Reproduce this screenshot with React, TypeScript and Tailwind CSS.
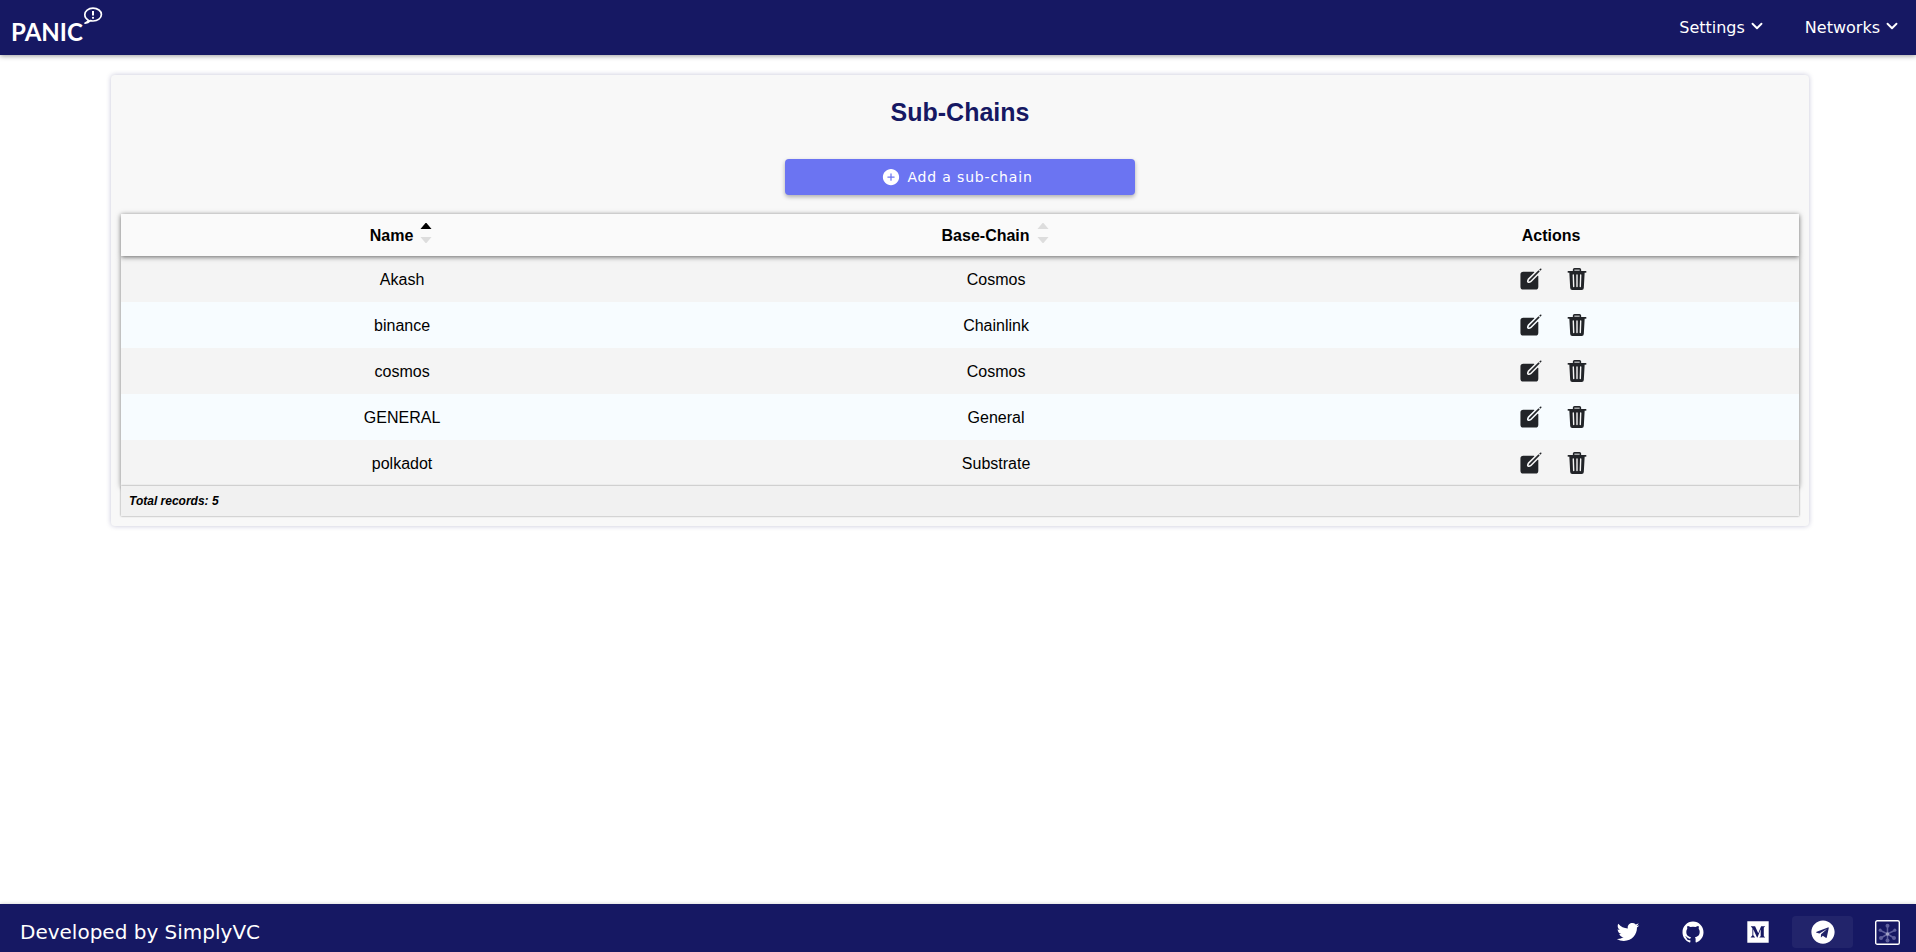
import type { ReactNode } from "react";
import {
  IoAddCircle,
  IoChevronDown,
  IoCreate,
  IoLogoGithub,
  IoLogoMedium,
  IoLogoTwitter,
} from "react-icons/io5";
import { FaTelegram } from "react-icons/fa";

type Chain = { name: string; base: string };

const chains: Chain[] = [
  { name: "Akash", base: "Cosmos" },
  { name: "binance", base: "Chainlink" },
  { name: "cosmos", base: "Cosmos" },
  { name: "GENERAL", base: "General" },
  { name: "polkadot", base: "Substrate" },
];

function Logo() {
  return (
    <a href="#home" className="flex h-full items-start pl-[11px]" aria-label="PANIC">
      <span className="mt-4 font-['Lato','Open_Sans',sans-serif] text-2xl/8 font-bold">PANIC</span>
      <svg className="mt-[7px] h-[18px] w-5" viewBox="0 0 20 18" fill="none" aria-hidden="true">
        <path
          d="M5.6 13.4C3.2 12.2 1.8 10 1.8 7.6 1.8 4 5.3 1.2 10 1.2s8.4 2.8 8.4 6.4S14.7 14 10 14c-1 0-1.900-.1-2.700-.4C5.900 15 4.300 15.900 2 16.200c1.500-.8 2.800-1.700 3.600-2.800Z"
          stroke="white"
          strokeWidth="1.700"
          strokeLinejoin="round"
        />
        <path d="M10 4v4.400" stroke="white" strokeWidth="2" />
        <circle cx="10" cy="10.800" r="1.100" fill="white" />
      </svg>
    </a>
  );
}

function NavMenu({ label }: { label: string }) {
  return (
    <button type="button" className="flex items-center gap-1 text-base">
      {label}
      <IoChevronDown className="-mt-1 size-4 [&_path]:stroke-[60px]" />
    </button>
  );
}

function SortArrows({ active = false }: { active?: boolean }) {
  return (
    <svg className="-mt-1.5 h-[22px] w-3" viewBox="0 0 12 22" aria-hidden="true">
      <path d="M0.500 7 5.500 1h1l5 6Z" fill={active ? "#000" : "#ddd"} />
      <path d="M0.500 15h11l-5 6h-1Z" fill="#ddd" />
    </svg>
  );
}

function SortHeader({ label, active }: { label: string; active?: boolean }) {
  return (
    <button type="button" className="inline-flex items-center gap-[7px] align-middle font-bold">
      {label}
      <SortArrows active={active} />
    </button>
  );
}

function TrashIcon() {
  return (
    <svg className="size-6" viewBox="0 0 24 24" fill="none" aria-hidden="true">
      <path d="M8.600 4.500V2.600q0-.9.900-.9h5q.9 0 .9.900v1.900" fill="#a5a7a9" stroke="currentColor" strokeWidth="1.500" />
      <path d="M2.700 4h18.600v1.700H2.700Z" fill="currentColor" />
      <path d="M4.300 5h15.400l-.9 16q-.1 2-2.100 2H7.300q-2 0-2.100-2Z" fill="currentColor" />
      <path d="m8.300 8 .4 11.500M12 8v11.500M15.700 8l-.4 11.500" stroke="#f4f4f4" strokeWidth="1.400" strokeLinecap="round" />
    </svg>
  );
}

function HubIcon() {
  return (
    <svg className="size-[25px]" viewBox="0 0 25 25" fill="none" aria-hidden="true">
      <rect x="0.700" y="0.700" width="23.600" height="23.600" rx="1.600" stroke="white" strokeWidth="1.400" />
      <path d="M12.500 6v14M5.500 10.500l7 3.500 7-3.500M6 18l6.500-4 6.500 4" stroke="#5f609d" strokeWidth="1.500" />
      <g fill="#5f609d">
        <circle cx="12.500" cy="5.800" r="2" />
        <circle cx="12.500" cy="20.500" r="2" />
        <circle cx="5.200" cy="10.200" r="1.600" />
        <circle cx="19.800" cy="10.200" r="1.600" />
        <circle cx="6" cy="18" r="2" />
        <circle cx="19" cy="18" r="2" />
      </g>
      <circle cx="12.500" cy="14" r="1.700" fill="#a0a1c5" />
    </svg>
  );
}

function SocialLink({ label, active, children }: { label: string; active?: boolean; children: ReactNode }) {
  return (
    <a
      href="#"
      aria-label={label}
      className={`flex h-8 w-[61px] shrink-0 items-center justify-center rounded-sm text-2xl ${active ? "bg-white/5" : ""}`}
    >
      {children}
    </a>
  );
}

export default function App() {
  return (
    <div className="flex min-h-screen flex-col overflow-x-hidden bg-white font-['Liberation_Sans',Arial,sans-serif] text-black">
      <header className="flex h-[55px] items-center justify-between bg-[#161863] font-['DejaVu_Sans',sans-serif] text-white shadow-[0_1px_5px_rgba(0,0,0,0.400)]">
        <Logo />
        <nav className="flex gap-10 pr-4">
          <NavMenu label="Settings" />
          <NavMenu label="Networks" />
        </nav>
      </header>

      <main className="flex-1 pt-5 pr-[107px] pl-[111px]">
        <section className="rounded bg-[#f8f8f8] p-2.5 shadow-[0_0_5px_rgba(22,24,99,0.250)]">
          <h1 className="pt-3 text-center text-[25px]/[30px] font-bold text-[#161863]">Sub-Chains</h1>
          <button
            type="button"
            className="mx-auto mt-8 flex h-9 w-[350px] items-center justify-center gap-1.5 rounded bg-[#6b74f2] pr-1.5 font-['DejaVu_Sans',sans-serif] text-sm tracking-[0.06em] text-white shadow-[0_2px_4px_rgba(0,0,0,0.300)]"
          >
            <IoAddCircle className="size-5" />
            Add a sub-chain
          </button>

          <table className="mt-[19px] w-full table-fixed border-separate border-spacing-0 text-center text-base">
            <colgroup>
              <col className="w-[33.500%]" />
              <col className="w-[37.300%]" />
              <col />
            </colgroup>
            <thead className="relative z-10 bg-[#fafafa] shadow-[0_1px_5px_rgba(0,0,0,0.600)]">
              <tr className="h-[42px]">
                <th scope="col" aria-sort="ascending" className="pt-0.5 pr-0.5">
                  <SortHeader label="Name" active />
                </th>
                <th scope="col" className="pt-0.5 pr-0.5">
                  <SortHeader label="Base-Chain" />
                </th>
                <th scope="col" className="pt-0.5 pr-1.5">
                  Actions
                </th>
              </tr>
            </thead>
            <tbody className="shadow-[0_1px_5px_rgba(0,0,0,0.500)]">
              {chains.map((chain) => (
                <tr key={chain.name} className="h-[46px] odd:bg-[#f4f4f4] even:bg-[#f7fcff]">
                  <td className="pt-0.5">{chain.name}</td>
                  <td className="pt-0.5">{chain.base}</td>
                  <td className="pr-0.5">
                    <div className="flex items-center justify-center gap-[21px] text-[#222428]">
                      <button type="button" aria-label={`Edit ${chain.name}`}>
                        <IoCreate className="size-[26px]" />
                      </button>
                      <button type="button" aria-label={`Delete ${chain.name}`}>
                        <TrashIcon />
                      </button>
                    </div>
                  </td>
                </tr>
              ))}
            </tbody>
            <tfoot className="relative bg-[#f1f1f1] shadow-[0_0_2px_rgba(0,0,0,0.450)]">
              <tr className="h-[30px]">
                <td colSpan={3} className="px-2 text-left text-xs font-bold italic">
                  Total records: {chains.length}
                </td>
              </tr>
            </tfoot>
          </table>
        </section>
      </main>

      <footer className="flex h-12 items-start justify-between bg-[#161863] pt-3 pl-5 font-['DejaVu_Sans',sans-serif] text-white shadow-[0_0_4px_rgba(0,0,0,0.200)]">
        <p className="text-xl/8">Developed by SimplyVC</p>
        <div className="-mr-0.5 flex gap-1">
          <SocialLink label="Twitter">
            <IoLogoTwitter />
          </SocialLink>
          <SocialLink label="GitHub">
            <IoLogoGithub />
          </SocialLink>
          <SocialLink label="Medium">
            <IoLogoMedium />
          </SocialLink>
          <SocialLink label="Telegram" active>
            <FaTelegram />
          </SocialLink>
          <SocialLink label="Network hub">
            <HubIcon />
          </SocialLink>
        </div>
      </footer>
    </div>
  );
}
